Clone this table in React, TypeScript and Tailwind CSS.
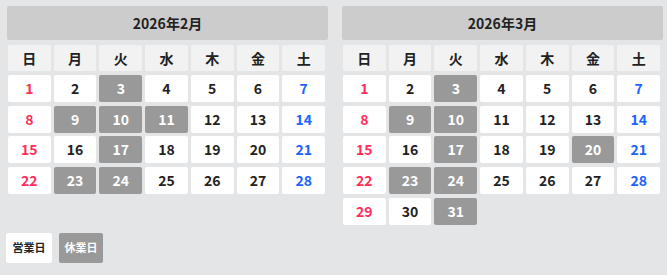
const WEEK = ['日', '月', '火', '水', '木', '金', '土']

type Month = { title: string; offset: number; days: number; closed: number[] }

const months: Month[] = [
  { title: '2026年2月', offset: 0, days: 28, closed: [3, 9, 10, 11, 17, 23, 24] },
  { title: '2026年3月', offset: 0, days: 31, closed: [3, 9, 10, 17, 20, 23, 24, 31] }
]

function Calendar({ month }: { month: Month }) {
  const cells: (number | null)[] = []
  for (let i = 0; i < month.offset; i++) cells.push(null)
  for (let d = 1; d <= month.days; d++) cells.push(d)

  return (
    <div className="w-[321px]">
      <div className="flex h-[34px] items-center justify-center rounded-[2px] bg-[#cccccc] text-[14px] font-bold text-[#222]">
        {month.title}
      </div>
      <div className="mt-[5px] grid w-[317px] ml-px grid-cols-7 gap-x-[3px] gap-y-[3.67px]">
        {WEEK.map((w) => (
          <div
            key={w}
            className="mb-[0.33px] flex h-[26px] items-center justify-center rounded-[2px] bg-[#f2f2f2] text-[14px] font-bold text-[#222]"
          >
            {w}
          </div>
        ))}
        {cells.map((d, i) => {
          if (d === null) return <div key={i} />
          const col = i % 7
          const closed = month.closed.includes(d)
          let color = 'text-[#222]'
          if (closed) color = 'text-white'
          else if (col === 0) color = 'text-[#ff2d5a]'
          else if (col === 6) color = 'text-[#1c62ff]'
          return (
            <div
              key={i}
              className={`flex h-[27px] items-center justify-center rounded-[2px] text-[14px] font-bold ${
                closed ? 'bg-[#999999]' : 'bg-white'
              } ${color}`}
            >
              {d}
            </div>
          )
        })}
      </div>
    </div>
  )
}

export default function App() {
  return (
    <div
      className="h-[275px] w-[667px] bg-[#e4e5e7] pl-[7px] pt-[6px]"
      style={{ fontFamily: '"Noto Sans CJK JP", "Noto Sans", sans-serif' }}
    >
      <div className="flex gap-[14px]">
        {months.map((m) => (
          <Calendar key={m.title} month={m} />
        ))}
      </div>
      <div className="mt-[8px] flex gap-[7px] -ml-px">
        <div className="flex h-[30px] w-[46px] items-center justify-center rounded-[2px] bg-white text-[11px] font-bold text-[#222]">
          営業日
        </div>
        <div className="flex h-[30px] w-[44px] items-center justify-center rounded-[2px] bg-[#999999] text-[11px] font-bold text-white">
          休業日
        </div>
      </div>
    </div>
  )
}
